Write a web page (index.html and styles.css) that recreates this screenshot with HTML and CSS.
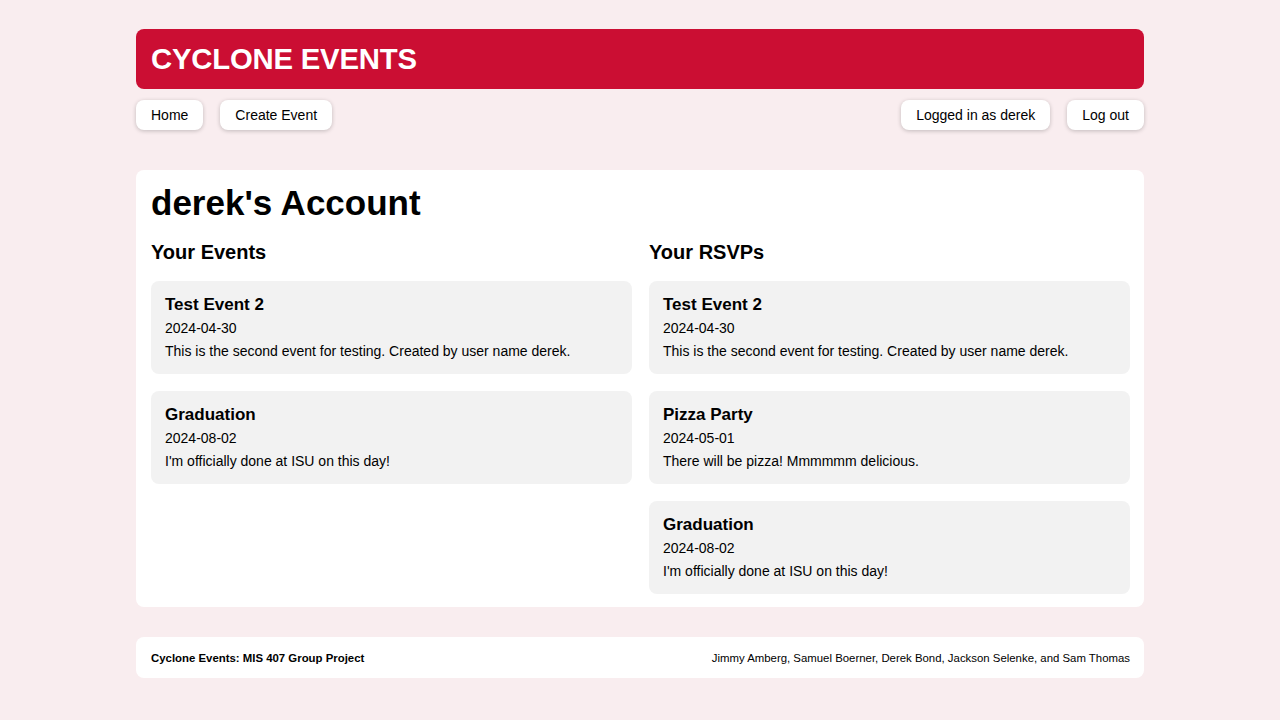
FILE: index.html
```html
<!DOCTYPE html>
<html lang="en">
<head>
<meta charset="utf-8">
<title>Cyclone Events</title>
<link rel="stylesheet" href="styles.css">
</head>
<body>
<div class="page">
  <header class="banner">
    <div class="brand">CYCLONE EVENTS</div>
  </header>
  <nav class="nav">
    <div class="nav-group">
      <a class="btn" href="#">Home</a>
      <a class="btn" href="#">Create Event</a>
    </div>
    <div class="nav-group">
      <a class="btn" href="#">Logged in as derek</a>
      <a class="btn" href="#">Log out</a>
    </div>
  </nav>
  <main class="panel">
    <h1 class="title">derek's Account</h1>
    <div class="columns">
      <section class="column">
        <h2 class="subtitle">Your Events</h2>
        <div class="event">
          <div class="event-name">Test Event 2</div>
          <div class="event-line">2024-04-30</div>
          <div class="event-line">This is the second event for testing. Created by user name derek.</div>
        </div>
        <div class="event">
          <div class="event-name">Graduation</div>
          <div class="event-line">2024-08-02</div>
          <div class="event-line">I'm officially done at ISU on this day!</div>
        </div>
      </section>
      <section class="column">
        <h2 class="subtitle">Your RSVPs</h2>
        <div class="event">
          <div class="event-name">Test Event 2</div>
          <div class="event-line">2024-04-30</div>
          <div class="event-line">This is the second event for testing. Created by user name derek.</div>
        </div>
        <div class="event">
          <div class="event-name">Pizza Party</div>
          <div class="event-line">2024-05-01</div>
          <div class="event-line">There will be pizza! Mmmmmm delicious.</div>
        </div>
        <div class="event">
          <div class="event-name">Graduation</div>
          <div class="event-line">2024-08-02</div>
          <div class="event-line">I'm officially done at ISU on this day!</div>
        </div>
      </section>
    </div>
  </main>
  <footer class="footer">
    <span class="footer-title">Cyclone Events: MIS 407 Group Project</span>
    <span class="footer-credits">Jimmy Amberg, Samuel Boerner, Derek Bond, Jackson Selenke, and Sam Thomas</span>
  </footer>
</div>
</body>
</html>
```
FILE: styles.css
```css
* { box-sizing: border-box; }

html, body {
  margin: 0;
  padding: 0;
}

body {
  background: #f9edef;
  font-family: "Liberation Sans", Arial, sans-serif;
  color: #000;
}

.page {
  width: 1008px;
  margin: 0 auto;
  padding-top: 29px;
  display: flex;
  flex-direction: column;
}

.banner {
  background: #cb0e33;
  border-radius: 8px;
  height: 60px;
  padding: 0 15px;
  display: flex;
  align-items: center;
}

.brand {
  color: #fff;
  font-size: 29.3px;
  font-weight: 700;
  letter-spacing: -0.2px;
}

.nav {
  margin-top: 11px;
  display: flex;
  justify-content: space-between;
}

.nav-group {
  display: flex;
  gap: 17px;
}

.btn {
  display: block;
  height: 30px;
  line-height: 30px;
  padding: 0 15px;
  background: #fff;
  border-radius: 8px;
  box-shadow: 0 1px 4px rgba(0, 0, 0, 0.22);
  color: #000;
  font-size: 14px;
  text-decoration: none;
}

.panel {
  margin-top: 40px;
  background: #fff;
  border-radius: 8px;
  padding: 15px 14px 13px 15px;
}

.title {
  margin: 0;
  font-size: 35px;
  line-height: 36px;
  font-weight: 700;
}

.columns {
  display: grid;
  grid-template-columns: 1fr 1fr;
  column-gap: 17px;
  align-items: start;
}

.column {
  display: flex;
  flex-direction: column;
  gap: 17px;
}

.subtitle {
  margin: 19px 0 0;
  font-size: 20px;
  line-height: 24px;
  font-weight: 700;
}

.event {
  background: #f2f2f2;
  border-radius: 8px;
  padding: 12px 14px 11px 14px;
}

.event-name {
  font-size: 17px;
  font-weight: 700;
  line-height: 24px;
}

.event-line {
  font-size: 14px;
  line-height: 23px;
}

.footer {
  margin-top: 30px;
  background: #fff;
  border-radius: 8px;
  height: 41px;
  padding: 0 14px 0 15px;
  display: flex;
  align-items: center;
  justify-content: space-between;
  font-size: 11.4px;
}

.footer-title {
  font-weight: 700;
}
```
